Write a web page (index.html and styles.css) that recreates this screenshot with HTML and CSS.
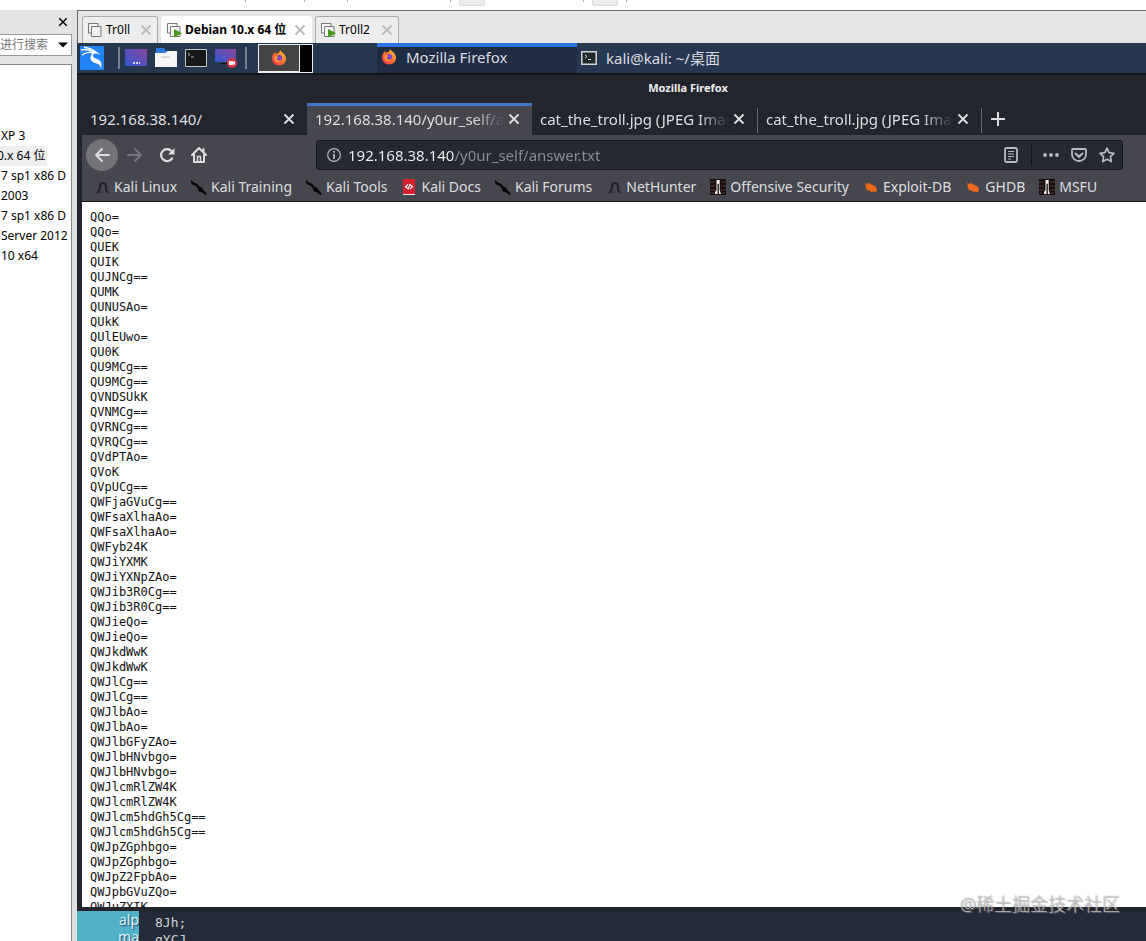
FILE: index.html
```html
<!DOCTYPE html>
<html lang="zh-CN">
<head>
<meta charset="utf-8">
<title>Debian 10.x 64 位</title>
<link rel="stylesheet" href="styles.css">
</head>
<body>
<svg class="defs" aria-hidden="true">
  <defs>
    <linearGradient id="screen" x1="0" y1="1" x2="1" y2="0"><stop offset="0" stop-color="#2f58cf"/><stop offset="1" stop-color="#8d45a0"/></linearGradient>
    <linearGradient id="flame" x1="1" y1="0" x2="0" y2="1"><stop offset="0" stop-color="#ffd83c"/><stop offset=".45" stop-color="#ff7a28"/><stop offset="1" stop-color="#ee2458"/></linearGradient>
  </defs>
  <symbol id="x" viewBox="0 0 12 12"><path d="M1.5 1.5l9 9M10.5 1.5l-9 9" fill="none" stroke="currentColor" stroke-width="1.8"/></symbol>
  <symbol id="vm" viewBox="0 0 16 16"><path d="M4 11H1.5V1.500H11V4M4.500 4.500h9.500v10H4.500z" fill="#f1f1f1" stroke="#777"/></symbol>
  <symbol id="vm-on" viewBox="0 0 16 16"><path d="M4 11H1.500V1.500H11V4M4.500 4.500h9.500v10H4.500z" fill="#f7f7f7" stroke="#777"/><path d="M8 7l8 4.200-8 4.300z" fill="#459b19"/></symbol>
  <symbol id="firefox" viewBox="0 0 16 16"><path d="M2 4.500L4 2l1 2c1-1 2-1.200 3-1 0-1 .5-2 1.500-2.800C10 2 14.800 3.800 15 8.500 15 12.700 11.900 15.500 8 15.500S1 12.500 1 8.500C1 7 1.300 5.500 2 4.500z" fill="url(#flame)"/><circle cx="8.300" cy="7.800" r="2.800" fill="#7c42cf"/><path d="M3.500 6.500c1.500-.6 3.300-.3 4.500.7-1.800 0-2.300.8-2.300 1.800 0 2 2.700 2.700 4.400 1.200-.8 2.600-5 3.100-6.500 0z" fill="#ff9d31"/></symbol>
  <symbol id="dragon" viewBox="0 0 16 16"><path d="M3 14c1.500-1.500 2.500-3 2.800-5C6 6.500 6.500 4 9 4c3 0 3.500 3 3 5-.4 1.800.5 3.300 2 4.500" fill="none" stroke="#202128" stroke-width="1.900"/><path d="M2 14.500L5 11l3 2.800zM6 6l1.500-3 3 .5z" fill="#292b32"/></symbol>
  <symbol id="blade" viewBox="0 0 16 16"><path d="M0 1l1 4 3 1 3 3 1 3 3 1 4 3v-2l-3-3-1-2-3-1-2-3-3-1z" fill="#050506" stroke="#050506" stroke-width=".8"/></symbol>
  <symbol id="docs" viewBox="0 0 16 16"><path d="M2 0h12v16H2z" fill="#d5202b"/><path d="M2 15h12v1H2z" fill="#eee"/><path d="M7 5.500L4.500 8 7 9.500M9 5.500L11.500 7.500 9 10M9 5L7 10.500" fill="none" stroke="#fff" stroke-width="1.100"/></symbol>
  <symbol id="offsec" viewBox="0 0 16 16"><path d="M0 0h16v16H0z" fill="#160d0e"/><path d="M0 3h5M11 3h5M0 7h5M11 7h5M0 11h5M11 11h5M1 14h3M12 14h3" stroke="#603833"/><path d="M6.500 1h3.200v10l1.300 4H8.800V4.500l-1.300.5v10H5V13l1.500-2z" fill="#f4eee6"/></symbol>
  <symbol id="bug" viewBox="0 0 16 16"><path d="M2 4l3 1 1-2 1 2 3 1 3 2 1 3-1 2-4-.5-1 1-1-2-2-.5-2 .5 1-2-2-1 1-1z" fill="#ee681b"/></symbol>
</svg>

<div class="toolbar"><i></i><i></i><i></i><i></i><b></b><i></i><b></b><i></i></div>
<div class="workspace">
  <aside class="library">
    <header class="library-head"><button class="plain" aria-label="关闭库"><svg class="s10"><use href="#x"/></svg></button></header>
    <div class="search"><input aria-label="搜索" placeholder="进行搜索"><button class="plain" aria-label="搜索选项"><svg class="s10" viewBox="0 0 10 10"><path d="M0 2.500h10l-5 5z" fill="#000"/></svg></button></div>
    <ul class="machines">
      <li>XP 3</li><li class="current"><span>0.x 64 位</span></li><li>7 sp1 x86 D</li><li>2003</li><li>7 sp1 x86 D</li><li>Server 2012</li><li>10 x64</li>
    </ul>
  </aside>

  <main class="console">
    <nav class="vm-tabs" aria-label="虚拟机">
      <div class="vm-tab vm-short"><svg class="s16"><use href="#vm"/></svg><button class="plain">Tr0ll</button><button class="plain vm-close" aria-label="关闭 Tr0ll"><svg class="s12"><use href="#x"/></svg></button></div>
      <div class="vm-tab vm-active"><svg class="s16"><use href="#vm-on"/></svg><button class="plain">Debian 10.x 64 位</button><button class="plain vm-close" aria-label="关闭 Debian"><svg class="s12"><use href="#x"/></svg></button></div>
      <div class="vm-tab vm-last"><svg class="s16"><use href="#vm-on"/></svg><button class="plain">Tr0ll2</button><button class="plain vm-close" aria-label="关闭 Tr0ll2"><svg class="s12"><use href="#x"/></svg></button></div>
    </nav>

    <div class="panel">
      <div class="launchers">
        <button class="plain" aria-label="Kali"><svg class="s24" viewBox="0 0 24 24"><path d="M0 0h24v24H0z" fill="#2283f5"/><path d="M1 4c4-1 8-.5 12 2M2 9c4-3 8-3 11-2M4 1c4 1 8 2 12 5" fill="none" stroke="#fff" stroke-width="1.300"/><path d="M12 5c4 0 6 1 8 4-3-2-6-2-7 0-1 4 6 3 8 7 1 3 0 5 0 7-1-5-3-5-6-6-4-1-6-5-3-9z" fill="#fff"/></svg></button>
        <span class="rule"></span>
        <button class="plain" aria-label="桌面"><svg class="launcher" viewBox="0 0 22 20"><path d="M0 1h22v17H0z" fill="url(#screen)"/><path d="M8 15h2M11 15h2M14 15h1" stroke="#fff" stroke-width="1.500"/></svg></button>
        <button class="plain" aria-label="文件"><svg class="launcher" viewBox="0 0 22 20"><path d="M1 0h8l2 3h10v6H1z" fill="#2f78df"/><path d="M0 5h10l3-2h9v16H0z" fill="#f5f5f6"/><path d="M6 9h9" stroke="#bbb"/></svg></button>
        <button class="plain" aria-label="终端"><svg class="launcher" viewBox="0 0 22 20"><path d="M.5 1.500h21v17H.5z" fill="#151719" stroke="#c2c8cc"/><path d="M3 5l2 1.500L3 8M6 9h3" fill="none" stroke="#aaa"/></svg></button>
        <button class="plain" aria-label="录屏"><svg class="launcher" viewBox="0 0 22 20"><path d="M0 1h21v13H0z" fill="url(#screen)"/><path d="M6 15h7v1H6z" fill="#111"/><circle cx="17" cy="15" r="5" fill="#e52f3c"/><path d="M14 13h4v1l2-1v4l-2-1v1h-4z" fill="#fff"/></svg></button>
        <span class="rule"></span>
      </div>
      <div class="pager"><button class="plain" aria-label="工作区 1"><svg class="s16"><use href="#firefox"/></svg></button></div>
      <button class="plain task task-active"><svg class="s16"><use href="#firefox"/></svg>Mozilla Firefox</button>
      <button class="plain task"><svg class="s16" viewBox="0 0 16 16"><path d="M.8 1.800h14.400v12.400H.8z" fill="#20292d" stroke="#d2d5d6" stroke-width="1.500"/><path d="M4 5l2 1.500L4 8M7 9.500h3" fill="none" stroke="#ddd"/></svg>kali@kali: ~/桌面</button>
    </div>

    <section class="browser">
      <header class="window-title">Mozilla Firefox</header>
      <nav class="tabs">
        <div class="tab"><button class="plain tab-name">192.168.38.140/</button><button class="plain" aria-label="关闭标签"><svg class="s12"><use href="#x"/></svg></button></div>
        <div class="tab tab-active"><button class="plain tab-name tab-fade">192.168.38.140/y0ur_self/answer.txt</button><button class="plain" aria-label="关闭标签"><svg class="s12"><use href="#x"/></svg></button></div>
        <div class="tab"><button class="plain tab-name tab-fade">cat_the_troll.jpg (JPEG Image)</button><button class="plain" aria-label="关闭标签"><svg class="s12"><use href="#x"/></svg></button></div>
        <div class="tab tab-ruled"><button class="plain tab-name tab-fade">cat_the_troll.jpg (JPEG Image)</button><button class="plain" aria-label="关闭标签"><svg class="s12"><use href="#x"/></svg></button></div>
        <div class="tab-add"><button class="plain" aria-label="新建标签"><svg class="s14" viewBox="0 0 14 14"><path d="M7 0v14M0 7h14" stroke="currentColor" stroke-width="2"/></svg></button></div>
      </nav>
      <div class="nav">
        <button class="plain back" aria-label="后退"><svg class="s16" viewBox="0 0 16 16"><path d="M15 8H2M8 2L2 8l6 6" fill="none" stroke="currentColor" stroke-width="2" stroke-linecap="round" stroke-linejoin="round"/></svg></button>
        <button class="plain forward" aria-label="前进"><svg class="s16" viewBox="0 0 16 16"><path d="M1 8h13M8 2l6 6-6 6" fill="none" stroke="currentColor" stroke-width="1.800" stroke-linecap="round" stroke-linejoin="round"/></svg></button>
        <button class="plain" aria-label="刷新"><svg class="s16" viewBox="0 0 16 16"><path d="M12.500 4A6 6 0 1 0 13 11.500" fill="none" stroke="currentColor" stroke-width="2.200" stroke-linecap="round"/><path d="M15.500 1v6.500H9z" fill="currentColor"/></svg></button>
        <button class="plain" aria-label="主页"><svg class="s16" viewBox="0 0 16 16"><path d="M1 8l7-7 7 7M3 7v8h10V7M12.500 2v3" fill="none" stroke="currentColor" stroke-width="2" stroke-linejoin="round" stroke-linecap="round"/><path d="M6.500 15V9.500h3V15" fill="none" stroke="currentColor" stroke-width="1.500"/></svg></button>
        <div class="address">
          <svg class="s14" viewBox="0 0 14 14"><circle cx="7" cy="7" r="6.300" fill="none" stroke="currentColor" stroke-width="1.200"/><path d="M7 3v1.800M7 6v5" stroke="currentColor" stroke-width="1.800"/></svg>
          <input aria-label="地址" value="192.168.38.140/y0ur_self/answer.txt">
          <button class="plain reader" aria-label="阅读模式"><svg class="s16" viewBox="0 0 16 16"><rect x="2" y="1" width="12" height="14" rx="1.500" fill="none" stroke="currentColor" stroke-width="1.800"/><path d="M5 4.500h6M5 7h6M5 9.500h6M5 12h3" stroke="currentColor"/></svg></button>
          <button class="plain" aria-label="更多"><svg class="s16" viewBox="0 0 16 16"><circle cx="2" cy="8" r="1.900"/><circle cx="8" cy="8" r="1.900"/><circle cx="14" cy="8" r="1.900"/></svg></button>
          <button class="plain" aria-label="Pocket"><svg class="s16" viewBox="0 0 16 16"><path d="M2 2h12q1 0 1 1v4.500a7 6.500 0 0 1-14 0V3q0-1 1-1z" fill="none" stroke="currentColor" stroke-width="1.800"/><path d="M4.500 6.500L8 9.800l3.500-3.300" fill="none" stroke="currentColor" stroke-width="2" stroke-linecap="round"/></svg></button>
          <button class="plain" aria-label="收藏"><svg class="s16" viewBox="0 0 16 16"><path d="M8 1.200l2.100 4.500 4.900.6-3.600 3.400.9 4.900L8 12.200l-4.300 2.400.9-4.900L1 6.300l4.900-.6z" fill="none" stroke="currentColor" stroke-width="1.700" stroke-linejoin="round"/></svg></button>
        </div>
      </div>
      <nav class="bookmarks">
        <a href="#"><svg class="s16"><use href="#dragon"/></svg>Kali Linux</a>
        <a href="#"><svg class="s16"><use href="#blade"/></svg>Kali Training</a>
        <a href="#"><svg class="s16"><use href="#blade"/></svg>Kali Tools</a>
        <a href="#"><svg class="s16"><use href="#docs"/></svg>Kali Docs</a>
        <a href="#"><svg class="s16"><use href="#blade"/></svg>Kali Forums</a>
        <a href="#"><svg class="s16"><use href="#dragon"/></svg>NetHunter</a>
        <a href="#"><svg class="s16"><use href="#offsec"/></svg>Offensive Security</a>
        <a href="#"><svg class="s16"><use href="#bug"/></svg>Exploit-DB</a>
        <a href="#"><svg class="s16"><use href="#bug"/></svg>GHDB</a>
        <a href="#"><svg class="s16"><use href="#offsec"/></svg>MSFU</a>
      </nav>
      <pre class="page">QQo=
QQo=
QUEK
QUIK
QUJNCg==
QUMK
QUNUSAo=
QUkK
QUlEUwo=
QU0K
QU9MCg==
QU9MCg==
QVNDSUkK
QVNMCg==
QVRNCg==
QVRQCg==
QVdPTAo=
QVoK
QVpUCg==
QWFjaGVuCg==
QWFsaXlhaAo=
QWFsaXlhaAo=
QWFyb24K
QWJiYXMK
QWJiYXNpZAo=
QWJib3R0Cg==
QWJib3R0Cg==
QWJieQo=
QWJieQo=
QWJkdWwK
QWJkdWwK
QWJlCg==
QWJlCg==
QWJlbAo=
QWJlbAo=
QWJlbGFyZAo=
QWJlbHNvbgo=
QWJlbHNvbgo=
QWJlcmRlZW4K
QWJlcmRlZW4K
QWJlcm5hdGh5Cg==
QWJlcm5hdGh5Cg==
QWJpZGphbgo=
QWJpZGphbgo=
QWJpZ2FpbAo=
QWJpbGVuZQo=
QWJuZXIK</pre>
    </section>
    <div class="desktop">
      <div class="wallpaper">alp<br>ma</div>
      <div class="terminal">8Jh;<br>gYCJ</div>
    </div>
  </main>
</div>
<div class="watermark">@稀土掘金技术社区</div>
</body>
</html>
```
FILE: styles.css
```css
* { box-sizing: border-box; }
body {
  margin: 0;
  height: 100vh;
  overflow: hidden;
  position: relative;
  display: flex;
  flex-direction: column;
  background: #fff;
  font: 12px/20px "Noto Sans", "Noto Sans CJK SC", sans-serif;
}
svg { display: block; flex: none; fill: currentColor; }
.defs { position: absolute; width: 0; height: 0; }
.s10 { width: 10px; height: 10px; }
.s12 { width: 12px; height: 12px; }
.s14 { width: 14px; height: 14px; }
.s16 { width: 16px; height: 16px; }
.s24 { width: 24px; height: 24px; }
.launcher { width: 22px; height: 20px; }
.plain { border: 0; padding: 0; background: none; color: inherit; font: inherit; white-space: nowrap; }
input { min-width: 0; border: 0; padding: 0; background: none; font: inherit; outline: 0; }

.toolbar { flex: none; height: 10px; display: flex; padding-left: 245px; }
.toolbar i { width: 1px; height: 2px; background: #aaa; margin-right: 58px; }
.toolbar i:nth-child(2) { margin-right: 42px; }
.toolbar i:nth-child(3) { margin-right: 102px; }
.toolbar i:nth-child(4), .toolbar i:nth-child(6) { margin-right: 8px; }
.toolbar b { width: 26px; height: 6px; border: 1px solid #ddd; border-top: 0; border-radius: 0 0 3px 3px; background: #eee; margin-right: 98px; }
.toolbar b:nth-child(7) { margin-right: 8px; }

.workspace { flex: 1; min-height: 0; display: grid; grid-template-columns: 72px 1fr; }
.library { min-width: 0; display: flex; flex-direction: column; background: #e3e4e5; overflow: hidden; }
.library-head { height: 24px; display: flex; align-items: center; justify-content: flex-end; padding-right: 4px; }
.search { height: 22px; display: flex; align-items: center; border: 1px solid #999; border-left: 0; background: #fff; padding-right: 3px; }
.search input { flex: 1; }
.search input::placeholder { color: #777; opacity: 1; }
.machines { flex: 1; margin: 8px 0 0; padding: 61px 0 0 1px; list-style: none; border: 1px solid #888; border-width: 1px 1px 0 0; background: #fff; white-space: nowrap; overflow: hidden; }
.current { margin-left: -4px; }
.current span { display: inline-block; padding-right: 2px; background: #eee; }

.console { min-width: 0; min-height: 0; display: flex; flex-direction: column; border-left: 5px solid #dfe0e1; background: #e4e5e6; }
.vm-tabs { flex: none; height: 33px; padding: 5px 0 0 4px; display: flex; gap: 3px; border-top: 1px solid #666; border-left: 1px solid #666; }
.vm-tab { display: flex; align-items: center; border: 1px solid #aaa; border-bottom: 0; border-radius: 3px 3px 0 0; padding: 0 5px 0 4px; gap: 3px; background: #ededee; }
.vm-short { width: 76px; }
.vm-active { width: 151px; background: #fff; border-color: #fff; font-weight: 700; }
.vm-last { width: 84px; }
.vm-close { margin-left: auto; color: #bbb; }

.panel { flex: none; height: 32px; display: flex; background: #263750; border-bottom: 2px solid #11151c; color: #d9dde2; font-size: 15px; }
.launchers { display: flex; align-items: center; gap: 8px; padding-left: 3px; }
.rule { width: 2px; height: 22px; margin: 0 -3px 0 6px; background: #77818f; }
.launchers .rule:last-child { margin: 0; }
.pager { width: 55px; margin: 1px 0 0 11px; border: 1px solid #eee; background: #000; }
.pager button { width: 41px; height: 27px; display: grid; place-items: center; background: #444; border: 1px solid #eee; border-width: 0 1px 1px 0; }
.task { width: 200px; display: flex; align-items: center; gap: 9px; padding-left: 4px; }
.task-active { margin-left: 64px; border-top: 4px solid #2c74df; background: #202c41; padding-bottom: 6px; box-shadow: inset 0 0 0 0 #202c41; }

.browser { flex: 1; min-height: 0; display: flex; flex-direction: column; padding: 0 0 4px 5px; background: #22252e; color: #dedee0; font-size: 15px; }
.window-title { flex: none; height: 28px; padding-left: 148px; text-align: center; font-size: 11px; line-height: 26px; font-weight: 700; color: #eee; }
.tabs { flex: none; height: 32px; display: flex; }
.tab { flex: 0 1 225px; min-width: 0; display: flex; align-items: center; gap: 4px; padding: 0 12px 0 8px; }
.tab-name { flex: 1; min-width: 0; height: 24px; text-align: left; overflow: hidden; }
.tab-fade { mask-image: linear-gradient(90deg, #000 calc(100% - 30px), transparent); }
.tab-active { border-top: 3px solid #4277ca; background: #45464e; padding-bottom: 3px; }
.tab-ruled { border: 1px solid #555761; border-width: 0 1px; border-image: linear-gradient(transparent 18%, #666873 18% 92%, transparent 92%) 1; }
.tab-add { display: flex; align-items: center; padding-left: 9px; }
.nav { flex: none; height: 40px; display: flex; align-items: center; gap: 16px; padding: 0 23px 0 4px; background: #45464e; }
.back { width: 32px; height: 32px; border-radius: 50%; display: grid; place-items: center; background: #737479; margin-right: -7px; }
.forward { color: #77787f; }
.address { flex: 1; min-width: 0; height: 30px; margin-left: 93px; display: flex; align-items: center; gap: 12px; padding: 0 7px 0 10px; border: 1px solid #17191f; border-radius: 3px; background: #262933; color: #b7b9c0; }
.address input { flex: 1; margin-left: -5px; height: 24px; color: transparent; background: linear-gradient(90deg, #f4f4f6 106px, #8c8e98 106px); background-clip: text; }
.reader { padding-right: 12px; border-right: 1px solid #111319; height: 22px; margin-right: -1px; }
.bookmarks { flex: none; height: 27px; display: flex; align-items: center; gap: 14px; padding: 0 0 2px 12px; background: #45464e; border-bottom: 1px solid #15151b; font-size: 14px; white-space: nowrap; overflow: hidden; }
.bookmarks a { display: flex; align-items: center; gap: 4px; color: inherit; text-decoration: none; }
.page { flex: 1; min-height: 0; overflow: hidden; margin: 0; padding: 8px; background: #fff; color: #111; font: 12px/15px "DejaVu Sans Mono", monospace; }

.desktop { flex: none; height: 30px; display: grid; grid-template-columns: 62px 1fr; overflow: hidden; background: #242b38; color: #ccd3da; }
.wallpaper { overflow: hidden; background: #51b1c9; text-align: right; font-size: 14px; line-height: 17px; color: #def4fa; text-shadow: 1px 1px 1px #246; }
.terminal { padding: 3px 0 0 16px; font: 13px/17px "DejaVu Sans Mono", monospace; }
.watermark { position: absolute; right: 26px; bottom: 24px; font-size: 18px; line-height: 26px; font-weight: 300; color: #fff8; text-shadow: 0 0 1px #777, 1px 1px 0 #9998; }
```
